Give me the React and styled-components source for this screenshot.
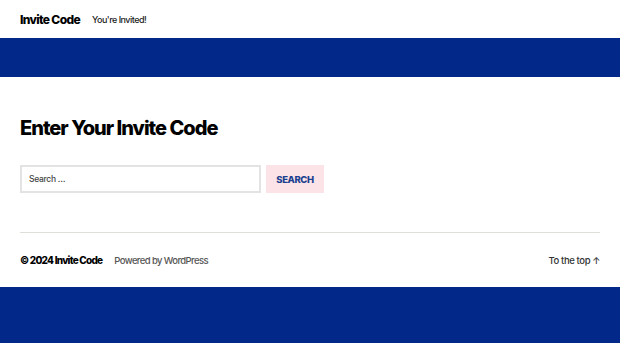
import styled, { createGlobalStyle } from "styled-components";

const GlobalStyle = createGlobalStyle`
  html, body {
    margin: 0;
    padding: 0;
    background: #ffffff;
    font-family: Inter, "Noto Sans", sans-serif;
    color: #000000;
  }
`;

const App = () => {
  return (
    <Page>
      <GlobalStyle />
      <Header>
        <SiteTitle>Invite Code</SiteTitle>
        <Tagline>You're Invited!</Tagline>
      </Header>
      <Band height={39} />
      <Main>
        <Title>Enter Your Invite Code</Title>
        <SearchForm onSubmit={(e) => e.preventDefault()}>
          <SearchInput placeholder="Search …" />
          <SearchButton type="submit">Search</SearchButton>
        </SearchForm>
      </Main>
      <Footer>
        <FooterRow>
          <FooterLeft>
            <Copyright>© 2024 Invite Code</Copyright>
            <Powered>Powered by WordPress</Powered>
          </FooterLeft>
          <ToTop>To the top ↑</ToTop>
        </FooterRow>
      </Footer>
      <Band height={56} />
    </Page>
  );
};

export default App;

const Page = styled.div`
  width: 620px;
  height: 343px;
  overflow: hidden;
  display: flex;
  flex-direction: column;
`;

const Header = styled.header`
  height: 38px;
  flex-shrink: 0;
  display: flex;
  align-items: center;
  gap: 12px;
  padding: 0 20px;
`;

const SiteTitle = styled.div`
  font-size: 12px;
  font-weight: 800;
  letter-spacing: -0.65px;
`;

const Tagline = styled.div`
  font-size: 9px;
  font-weight: 500;
  color: #222;
  letter-spacing: -0.5px;
  margin-top: 1px;
`;

const Band = styled.div`
  height: ${(p) => p.height}px;
  flex-shrink: 0;
  background: #02298a;
`;

const Main = styled.main`
  padding: 38px 20px 0;
`;

const Title = styled.h1`
  margin: 0;
  font-size: 20px;
  font-weight: 800;
  letter-spacing: -1px;
  line-height: 26px;
`;

const SearchForm = styled.form`
  display: flex;
  gap: 5px;
  margin-top: 24px;
`;

const SearchInput = styled.input`
  width: 241px;
  height: 28px;
  box-sizing: border-box;
  border: 2px solid #e3e3e3;
  padding: 0 7px;
  font-family: Inter, sans-serif;
  font-size: 8.5px;
  font-weight: 500;
  letter-spacing: -0.3px;
  outline: none;
  &::placeholder {
    color: #444;
  }
`;

const SearchButton = styled.button`
  width: 58px;
  height: 28px;
  border: none;
  background: #fbe3e7;
  color: #1d3f8f;
  font-family: Inter, sans-serif;
  font-size: 9.5px;
  font-weight: 800;
  text-transform: uppercase;
  letter-spacing: -0.4px;
  padding: 0;
`;

const Footer = styled.footer`
  padding: 0 20px;
`;

const FooterRow = styled.div`
  margin-top: 39px;
  border-top: 1px solid #dedfd8;
  display: flex;
  justify-content: space-between;
  align-items: center;
  height: 54px;
`;

const FooterLeft = styled.div`
  display: flex;
  gap: 12px;
  align-items: center;
`;

const Copyright = styled.span`
  font-size: 10px;
  font-weight: 800;
  letter-spacing: -0.75px;
`;

const Powered = styled.span`
  font-size: 9.5px;
  font-weight: 500;
  color: #555;
  letter-spacing: -0.6px;
`;

const ToTop = styled.span`
  font-size: 9.5px;
  font-weight: 500;
  color: #333;
  letter-spacing: -0.4px;
`;
